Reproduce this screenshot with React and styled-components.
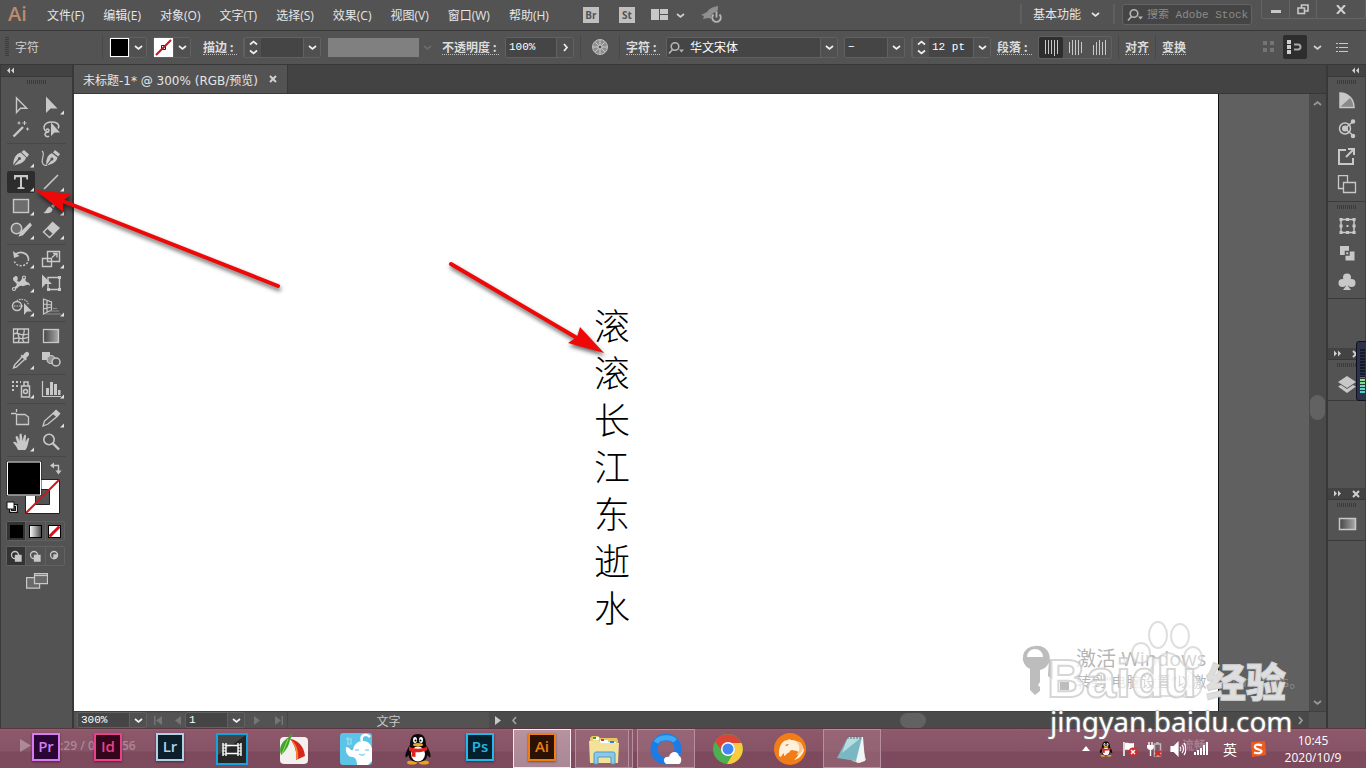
import React from 'react';
import styled, { createGlobalStyle } from 'styled-components';

const GlobalStyle = createGlobalStyle`
  * {
    box-sizing: border-box;
  }
  body {
    margin: 0;
    overflow: hidden;
    background: #535353;
    color: #e6e6e6;
    font-family: 'Open Sans', 'Noto Sans CJK SC', sans-serif;
    font-size: 12px;
  }
  button, input, select {
    margin: 0;
    padding: 0;
    border: 0;
    border-radius: 0;
    background: none;
    color: inherit;
    font: inherit;
    outline: none;
  }
  svg {
    display: block;
    flex: none;
  }
`;

const Screen = styled.div`
  position: relative;
  display: flex;
  flex-direction: column;
  height: 100vh;
`;

/* ---------- menu bar ---------- */

const MenuBar = styled.header`
  display: flex;
  height: 31px;
  padding-left: 8px;
  background: #535353;
  border-bottom: 1px solid #383838;
`;

const Brand = styled.span`
  width: 39px;
  color: #bd8a6d;
  font-size: 20px;
  font-weight: 600;
  line-height: 28px;
`;

const Menus = styled.nav`
  display: flex;
  align-items: center;
  gap: 19px;
  margin-right: 34px;
`;

const MenuButton = styled.button`
  line-height: 29px;
  white-space: nowrap;
`;

const LaunchButtons = styled.div`
  display: flex;
  align-items: center;
  gap: 16px;
`;

const LaunchTile = styled.button`
  width: 16px;
  height: 16px;
  background: #c0c0c0;
  color: #535353;
  font-size: 10px;
  font-weight: 700;
  line-height: 16px;

  & + & {
    margin-left: 4px;
  }
`;

const IconButton = styled.button`
  display: flex;
  align-items: center;
  justify-content: center;
  gap: 8px;
  min-width: ${(p) => p.$width || 16}px;
  height: ${(p) => p.$height || 20}px;
  background: ${(p) => (p.$active ? '#2e2e2e' : 'none')};
  border-radius: ${(p) => (p.$active ? 2 : 0)}px;
  color: ${(p) => (p.$dim ? '#6c6c6c' : '#d0d0d0')};
`;

const MenuRight = styled.div`
  display: flex;
  align-items: flex-start;
  margin-left: auto;
`;

const WorkspaceButton = styled.button`
  display: flex;
  align-items: center;
  gap: 10px;
  height: 20px;
  margin-top: 4px;
  padding: 0 13px 0 11px;
  border-left: 2px solid #5f5f5f;
  border-right: 2px solid #5f5f5f;
`;

const SearchBox = styled.label`
  display: flex;
  align-items: center;
  gap: 2px;
  width: 130px;
  height: 21px;
  margin: 4px 9px 0 7px;
  padding-left: 4px;
  background: #454545;
  border: 1px solid #636363;
  border-radius: 3px;

  input {
    width: 104px;
    font-family: 'Liberation Mono', 'Noto Sans CJK SC', monospace;
    font-size: 11px;
  }
  input::placeholder {
    color: #8c8c8c;
    opacity: 1;
  }
`;

const WindowButtons = styled.div`
  display: flex;
  height: 19px;
  border: 1px solid #646464;
  border-top: 0;
  border-radius: 0 0 3px 3px;

  button + button {
    border-left: 1px solid #646464;
  }
`;

/* ---------- control bar ---------- */

const ControlBar = styled.div`
  display: flex;
  align-items: center;
  gap: 6px;
  height: 34px;
  padding: 0 10px 1px 5px;
  background: #535353;
  border-bottom: 1px solid #383838;
  font-family: 'Liberation Mono', 'Noto Sans CJK SC', monospace;
`;

const BarGrip = styled.span`
  width: 4px;
  height: 20px;
  background: repeating-linear-gradient(#3c3c3c 0 1px, transparent 1px 2px);
`;

const BarTitle = styled.span`
  width: 81px;
  color: #cfcfcf;
`;

const Divider = styled.span`
  width: 1px;
  height: 24px;
  background: #484848;
`;

const PanelLink = styled.label`
  min-width: ${(p) => p.$width || 24}px;
  margin-left: ${(p) => (p.$spaced ? 6 : 0)}px;
  color: #dcdcdc;
  border-bottom: 1px dotted #bdbdbd;
  font-family: 'Noto Sans CJK SC', sans-serif;
  font-size: 12px;
  font-weight: 700;
  line-height: 14px;
  text-align: left;
  white-space: nowrap;
`;

const Field = styled.div`
  display: flex;
  width: ${(p) => p.$width}px;
  height: 21px;
  background: ${(p) => p.$fill || '#454545'};
  border: 1px solid ${(p) => (p.$plain ? 'transparent' : '#616161')};
  border-radius: 2px;

  input, select {
    flex: 1;
    min-width: 0;
    padding-left: 3px;
    color: #fff;
    font-family: 'Liberation Mono', 'Noto Sans CJK SC', monospace;
    font-size: ${(p) => (p.$large ? 12 : 11)}px;
    appearance: none;
  }
`;

const FieldButton = styled.button`
  display: flex;
  align-items: center;
  justify-content: center;
  width: 17px;
  background: #505050;
  border-left: 1px solid #616161;
  color: #f0f0f0;
`;

const Swatch = styled.span`
  width: 20px;
  background: ${(p) => p.$color};
  border: 1px solid #fff;
`;

const GreyWell = styled.span`
  flex: 1;
  background: #808080;
`;

const AlignGroup = styled.div`
  display: flex;
  border: 1px solid #616161;
  border-radius: 2px;
`;

const BarRight = styled.div`
  display: flex;
  align-items: center;
  gap: 6px;
  margin-left: auto;
`;

/* ---------- work area ---------- */

const WorkArea = styled.div`
  display: flex;
  flex: 1;
  min-height: 0;
  background: #383838;
`;

const ToolPanel = styled.aside`
  display: flex;
  flex-direction: column;
  width: 72px;
  margin-right: 2px;
  background: #535353;
  border-left: 1px solid #3a3a3a;
`;

const PanelHeader = styled.div`
  display: flex;
  align-items: center;
  justify-content: ${(p) => p.$align || 'space-between'};
  height: 12px;
  padding: 0 5px;
  background: #434343;
  border-bottom: 1px solid #383838;
  color: #cfcfcf;
`;

const Grip = styled.span`
  width: 19px;
  height: 4px;
  margin: 3px auto;
  background: repeating-linear-gradient(90deg, #3a3a3a 0 1px, transparent 1px 2px);
`;

const ToolGroup = styled.div`
  display: grid;
  grid-template-columns: 28px 28px;
  grid-auto-rows: 24px;
  column-gap: 2px;
  margin: 0 6px;
  padding: 2px 0;
  border-bottom: 1px solid #484848;

  &:nth-of-type(2) {
    margin-top: 4px;
  }
`;

const Tool = styled.button`
  height: 22px;
  margin: 1px 0;
  border-radius: 2px;
  background: ${(p) => (p.$active ? '#2d2d2d' : 'none')};
  color: #c8c8c8;
`;

const ColorBlock = styled.div`
  margin: 4px 0 4px 5px;
`;

const ModeRow = styled.div`
  display: flex;
  width: 59px;
  height: 20px;
  margin: 0 0 5px 5px;
  border: 1px solid #616161;
  border-radius: 2px;

  button {
    display: flex;
    flex: 1;
    align-items: center;
    justify-content: center;
    color: #c8c8c8;
  }
  button:first-child {
    background: #333;
  }
  button + button {
    border-left: 1px solid #616161;
  }
`;

const DocumentPane = styled.main`
  display: flex;
  flex: 1;
  flex-direction: column;
  min-width: 0;
`;

const TabBar = styled.div`
  display: flex;
  height: 29px;
  background: #434343;
  border-bottom: 1px solid #383838;
`;

const Tab = styled.div`
  display: flex;
  align-items: center;
  justify-content: space-between;
  width: 214px;
  padding: 0 10px 0 9px;
  background: #535353;
  border-right: 1px solid #383838;
  font-family: 'DejaVu Sans', 'Noto Sans CJK SC', sans-serif;
  white-space: nowrap;
`;

const CanvasRow = styled.div`
  display: flex;
  flex: 1;
  min-height: 0;
  background: #606060;
`;

const Artboard = styled.div`
  flex: 1;
  margin-right: 90px;
  padding: 207px 0 0 520px;
  background: #fff;
  border-right: 1px solid #111;
`;

const VerticalText = styled.p`
  display: grid;
  grid-auto-rows: 47px;
  margin: 0;
  color: #000;
  font-family: 'Noto Sans CJK SC', sans-serif;
  font-size: 36px;
  font-weight: 300;
  line-height: 47px;
`;

const ScrollColumn = styled.div`
  display: flex;
  flex-direction: column;
  align-items: center;
  width: 17px;
  padding: 5px 0 4px;
  background: #4a4a4a;
  color: #9a9a9a;
`;

const ScrollThumb = styled.span`
  flex: none;
  width: ${(p) => p.$width}px;
  height: ${(p) => p.$height}px;
  background: #626262;
  border-radius: 8px;
`;

const Space = styled.span`
  flex: ${(p) => p.$grow || 1};
`;

const StatusBar = styled.footer`
  display: flex;
  height: 17px;
  background: #4a4a4a;
  border-top: 1px solid #404040;
`;

const StatusInfo = styled.div`
  display: flex;
  align-items: center;
  width: 415px;
  padding-left: 3px;
  background: #535353;

  ${Field} {
    height: 16px;
  }
`;

const StatusLabel = styled.span`
  flex: 1;
  padding-top: 3px;
  border-left: 1px solid #484848;
  color: #c6c6c6;
  font-size: 12px;
  line-height: 14px;
  text-align: center;
`;

const ScrollRow = styled.div`
  display: flex;
  flex: 1;
  align-items: center;
  padding: 0 4px;
  color: #a0a0a0;
`;

const Corner = styled.span`
  width: 17px;
  background: #535353;
`;

/* ---------- right dock ---------- */

const Dock = styled.aside`
  position: relative;
  width: 38px;
  margin-left: 2px;
  background: #535353;
  border-right: 1px solid #404040;
`;

const DockPanel = styled.div`
  display: flex;
  flex-direction: column;
  padding-bottom: 2px;
  border-bottom: 1px solid #3a3a3a;
`;

const DockGap = styled.div`
  height: ${(p) => p.$height}px;
`;

const Meter = styled.div`
  position: absolute;
  top: 276px;
  right: -3px;
  width: 12px;
  height: 60px;
  padding: 7px 0 0 3px;
  background: #2b3249;
  border: 1px solid #10131f;
  border-radius: 3px;
`;

const MeterBars = styled.div`
  width: 5px;
  height: 45px;
  background:
    repeating-linear-gradient(transparent 0 2px, #2b3249 2px 3px),
    linear-gradient(#151a2b 0 28px, #9be07a 29px, #3fd0d8 45px);
`;

/* ---------- taskbar ---------- */

const TaskBar = styled.footer`
  position: relative;
  display: flex;
  height: 40px;
  padding-left: 17px;
  background: linear-gradient(#93606f 0, #8c586a 2px, #875366 22px, #7d495c 23px, #7e4a5d 100%);
  border-top: 1px solid #5a3642;
`;

const TaskList = styled.div`
  display: flex;
  gap: 4px;
`;

const Task = styled.button`
  position: relative;
  display: flex;
  align-items: center;
  justify-content: center;
  width: 58px;
  height: 39px;
  background: ${(p) => (p.$state === 'active' ? 'linear-gradient(#b7929f, #a98794)' : p.$state ? '#a0748280' : 'none')};
  border: 1px solid ${(p) => (p.$state === 'active' ? '#f4e9ee' : p.$state ? '#b88fa0' : 'transparent')};
  ${(p) => p.$stack && 'box-shadow: inset -4px 0 0 -1px #8b5b6c, inset -5px 0 0 -1px #b88fa0;'}
`;

const AppTile = styled.span`
  width: 28px;
  height: 28px;
  margin-bottom: 3px;
  background: ${(p) => p.$bg};
  border: 2px solid ${(p) => p.$color};
  box-shadow: 0 1px 2px #0006;
  color: ${(p) => p.$color};
  font-size: 15px;
  font-weight: 600;
  line-height: 23px;
`;

const PlayerGhost = styled.div`
  position: absolute;
  top: 8px;
  left: 20px;
  display: flex;
  align-items: center;
  color: #ffffff50;
  font-size: 12px;
  font-weight: 600;

  span:nth-of-type(1) {
    width: 62px;
    padding-left: 29px;
    box-sizing: content-box;
  }
`;

const Tray = styled.div`
  display: flex;
  align-items: center;
  gap: 8px;
  margin-left: auto;
  padding-right: 22px;
  color: #fff;
`;

const InputMode = styled.button`
  width: 16px;
  margin: 0 4px;
  color: #fff;
  font-size: 14px;
`;

const Clock = styled.time`
  width: 62px;
  margin-left: 8px;
  line-height: 17px;
  text-align: center;
`;

const QualityGhost = styled.span`
  position: absolute;
  right: 160px;
  top: 7px;
  color: #ffffff40;
  font-weight: 600;
`;

/* ---------- overlays ---------- */

const Arrows = styled.svg`
  position: absolute;
  left: 0;
  top: 0;
  pointer-events: none;
  filter: drop-shadow(1px 3px 2px #0009);
`;

const Watermark = styled.div`
  position: absolute;
  right: 62px;
  bottom: 30px;
  width: 284px;
  height: 123px;
  pointer-events: none;
  white-space: nowrap;
`;

const Activation = styled.div`
  position: absolute;
  left: 56px;
  top: 31px;
  color: #9c9c9cc0;
  font-size: 15px;
  line-height: 20px;

  strong {
    display: block;
    font-size: 20px;
    font-weight: 400;
    line-height: 25px;
  }
`;

const SiteLogo = styled.div`
  position: absolute;
  left: 27px;
  top: 34px;
  display: flex;
  align-items: baseline;
  gap: 9px;
  color: #ffffffb0;
  font-family: 'Liberation Sans', sans-serif;
  font-size: 54px;
  font-weight: 700;
  line-height: 58px;
  -webkit-text-stroke: 2px #c8c8c8c0;

  span {
    color: #dedede;
    font-family: 'Noto Sans CJK SC', sans-serif;
    font-size: 40px;
    font-weight: 900;
    -webkit-text-stroke: 1px #d4d4d4;
  }
`;

const SiteUrl = styled.div`
  position: absolute;
  left: 30px;
  bottom: 0;
  color: #fff;
  font-family: 'Noto Sans', sans-serif;
  font-size: 28px;
  line-height: 34px;
  text-shadow: 0 0 2px #777, 0 0 2px #888, 0 0 1px #999;
`;

const MarkArt = styled.svg`
  position: absolute;
  left: 0;
  top: 0;
`;

/* ---------- small glyphs ---------- */

const Chevron = ({ dir = 'down', size = 9 }) => {
  const d = {
    down: 'M1 3l3.5 3L8 3',
    up: 'M1 6l3.5-3L8 6',
    right: 'M3 1l3 3.5L3 8',
    left: 'M6 1L3 4.5 6 8',
  }[dir];
  return (
    <svg width={size} height={size} viewBox="0 0 9 9" fill="none" stroke="currentColor" strokeWidth="1.7">
      <path d={d} />
    </svg>
  );
};

const Stepper = () => (
  <svg width="11" height="17" fill="none" stroke="currentColor" strokeWidth="1.7">
    <path d="M2 5.5L5.5 2.5 9 5.5M2 11.5l3.500 3 3.500-3" />
  </svg>
);

const Doubles = ({ flip }) => (
  <svg width="9" height="7" fill="currentColor">
    <path d={flip ? 'M1 .5l3 3-3 3zM5 .5l3 3-3 3z' : 'M4 .5l-3 3 3 3zM8 .5l-3 3 3 3z'} />
  </svg>
);

const Cross = () => (
  <svg width="8" height="8" fill="none" stroke="currentColor" strokeWidth="2">
    <path d="M1 1l6 6M7 1L1 7" />
  </svg>
);

const Lens = () => (
  <svg width="18" height="14" fill="none" stroke="#b5b5b5" strokeWidth="1.600">
    <circle cx="7" cy="5.500" r="3.800" />
    <path d="M4.500 8.500L1 12.500" />
    <path d="M11 8.500h5l-2.500 3z" fill="#b5b5b5" stroke="none" />
  </svg>
);

const Triangle = ({ left, bar }) => (
  <svg width="9" height="9" fill="#757575">
    <path d={left ? 'M8 0v9L2 4.500z' : 'M1 0v9l6-4.500z'} />
    {bar && <path d={left ? 'M0 0h1.500v9H0z' : 'M7.500 0H9v9H7.500z'} />}
  </svg>
);

/* ---------- tools ---------- */

const solid = { fill: 'currentColor', stroke: 'none' };

const tools = [
  [
    { name: '选择工具', icon: <path d="M9.500 4v14.500l4-4.300h6.200z" strokeWidth="1.400" /> },
    { name: '直接选择工具', more: true, icon: <path d="M9 2.500v16.500l4.500-4.500h7z" {...solid} /> },
    {
      name: '魔棒工具',
      icon: (
        <>
          <path d="M6.500 18.500L16 9" strokeWidth="2.400" />
          <path d="M17.500 3v4M15.500 5h4M12 3.500v3M10.500 5h3M20.500 9.500v3M19 11h3" strokeWidth="1" />
        </>
      ),
    },
    {
      name: '套索工具',
      icon: (
        <>
          <path d="M12 14c-7 0-7-9.500 2-10 7-.3 9 3.500 7 6.500M9 12c2-2 4 0 2.500 1.500S7.500 14 8 16.500 11 19 12 18" strokeWidth="1.500" />
          <path d="M14 4.500V18l3.500-3.500H23z" {...solid} />
        </>
      ),
    },
  ],
  [
    {
      name: '钢笔工具',
      more: true,
      icon: <path d="M17 3l5 4.500-2 3L14.500 5zM13.500 5.500l5.500 5c-1 4-4 6-12 8L12 13a1.500 1.500 0 1 0-1-1l-4.800 6C6.500 10.500 9 7 13.500 5.500z" {...solid} />,
    },
    {
      name: '曲率工具',
      icon: (
        <>
          <path d="M18 3l5 4-1.700 2.500L16 5.500zM15 6.200l5.500 4.300c-1 4-3.500 6-10.500 8l4.500-5a1.500 1.500 0 1 0-1-1l-4.200 5.700C9 11 11 7.500 15 6.200z" {...solid} />
          <path d="M5 4c4 3-2 9 1 13 1 1.500 3 1.500 4 1" />
        </>
      ),
    },
    { name: '文字工具', active: true, more: true, icon: <path d="M7 4h14v4.500h-1.500L19 6.300h-4V16l2.500.5V18h-7v-1.500L13 16V6.300H9L8.500 8.500H7z" {...solid} /> },
    { name: '直线段工具', more: true, icon: <path d="M7 18L21 4" strokeWidth="1.600" /> },
    { name: '矩形工具', more: true, icon: <rect x="6.500" y="4.500" width="15" height="13" fill="#6d6d6d" strokeWidth="1.400" /> },
    {
      name: '画笔工具',
      more: true,
      icon: <path d="M22 2.500l-8 8.500 2.500 2L22 5zM13 11.500c-3 .5-3 4-6.500 6.500 5 1 9-.5 9-4.300z" {...solid} />,
    },
    {
      name: 'Shaper 工具',
      more: true,
      icon: (
        <>
          <circle cx="9.500" cy="9.500" r="5.200" fill="#6d6d6d" strokeWidth="1.500" />
          <path d="M23 3.500L13 13.500l-1.500 4.200 4.500-1.500 9-10z" {...solid} />
        </>
      ),
    },
    {
      name: '橡皮擦工具',
      more: true,
      icon: (
        <>
          <path d="M15.500 2.500L23 9l-6 6-7-6.500z" {...solid} />
          <path d="M10.500 9l-4 4 6 5.500 4-4z" strokeWidth="1.400" />
        </>
      ),
    },
  ],
  [
    {
      name: '旋转工具',
      more: true,
      icon: (
        <>
          <path d="M8 7c5-5 13-2 13.500 4" strokeWidth="1.800" />
          <path d="M21.500 11c0 8-13 9.500-14.500 1" strokeWidth="1.500" strokeDasharray="2 1.500" />
          <path d="M6 3l1 7 5.500-2z" {...solid} />
        </>
      ),
    },
    {
      name: '比例缩放工具',
      more: true,
      icon: <path d="M10.500 3.500h12v10h-12zM5.500 10.500h9v8h-9zM15 9.500l4.500-4M16 5.500h4v4" strokeWidth="1.400" />,
    },
    {
      name: '宽度工具',
      more: true,
      icon: (
        <>
          <path d="M6 6c4-5 6 0 4 3 6 3 4-5 7-5 3 1 0 5 3 6 2 .5 3 2 3 4-3-3-5 1-8 0-4-1-4 4-8 3 2-3 4-4 2-6-1-2-3-1-3-5z" {...solid} />
          <path d="M7 17L17 6" />
          <circle cx="7" cy="17" r="1.500" fill="#535353" />
          <circle cx="17" cy="5.500" r="1.500" fill="#535353" />
        </>
      ),
    },
    {
      name: '自由变换工具',
      icon: (
        <>
          <path d="M11 5.500h11.500v12H11z" strokeWidth="1.400" />
          <path d="M5 2.500v13.500l3.500-4h6.500z" {...solid} />
          <path d="M21 4h3v3h-3zM21 16h3v3h-3zM10 16h3v3h-3z" {...solid} />
        </>
      ),
    },
    {
      name: '形状生成器工具',
      more: true,
      icon: (
        <>
          <circle cx="10" cy="10" r="4.500" strokeWidth="1.500" />
          <path d="M10 5c2-3 12-2 11 4M7 10h10" strokeDasharray="1.500 1" />
          <path d="M17 7v12l3-3.500h5z" {...solid} />
        </>
      ),
    },
    {
      name: '透视网格工具',
      more: true,
      icon: (
        <>
          <path d="M6.500 3v15l8-4V6zM10 4v12.500M6.500 8l8 1M6.500 13l8-2" />
          <path d="M16 12.500h4M13 15h9M8 18h16" stroke="#8c8c8c" />
        </>
      ),
    },
  ],
  [
    {
      name: '网格工具',
      icon: <path d="M6.500 4h15v13.500h-15zM6.500 9c6-3 5 3 15 0M6.500 14c6-3 8 2 15-2M11 4c-3 5 4 7 0 13.500M17 4c2 5-4 7 0 13.500" strokeWidth="1.300" />,
    },
    {
      name: '渐变工具',
      icon: (
        <>
          <linearGradient id="toolGradient"><stop stopColor="#444" /><stop offset="1" stopColor="#aaa" /></linearGradient>
          <rect x="6.500" y="4.500" width="15" height="13" fill="url(#toolGradient)" strokeWidth="1.300" />
        </>
      ),
    },
    {
      name: '吸管工具',
      more: true,
      icon: (
        <>
          <path d="M15 8l-7.500 8-1 3 3-1 8-7.500" strokeWidth="1.400" />
          <path d="M13.500 7l1.500-1.500 1 1C18 3 20 2 21.500 3.500S22 7 19 9l1 1-1.500 1.500z" {...solid} />
        </>
      ),
    },
    {
      name: '混合工具',
      icon: (
        <>
          <path d="M5 3h8v8H5z" {...solid} />
          <circle cx="14" cy="10.500" r="4" fill="#909090" />
          <circle cx="19" cy="13" r="4" fill="#535353" strokeWidth="1.500" />
        </>
      ),
    },
  ],
  [
    {
      name: '符号喷枪工具',
      more: true,
      icon: (
        <>
          <path d="M5 4h2M9 4h2M13 4h1M5 8h2M9 8h2M5 12h2" strokeWidth="2" />
          <path d="M14.500 8h8v11h-8zM17 7.500V4h4v3.500" strokeWidth="1.500" />
          <circle cx="18.500" cy="13.500" r="2" strokeWidth="1.500" />
        </>
      ),
    },
    {
      name: '柱形图工具',
      more: true,
      icon: (
        <>
          <path d="M5.500 3v15.500H24" />
          <path d="M9 10h3v7H9zM13 4h3v13h-3zM17 6h3v11h-3zM21 12h2.500v5H21z" {...solid} />
        </>
      ),
    },
  ],
  [
    { name: '画板工具', icon: <path d="M4 6.500h5.500M9.500 2v3M9.500 7.500V17.500h12V10l-3.500-2.500z" strokeWidth="1.300" fill="#5f5f5f" /> },
    {
      name: '切片工具',
      more: true,
      icon: (
        <>
          <path d="M16 6.500L7.500 14 6 19l5-2 9-7.500z" strokeWidth="1.300" />
          <path d="M19 2.500l4.500 4-3 3.500-5-4z" {...solid} />
        </>
      ),
    },
    {
      name: '抓手工具',
      more: true,
      icon: <path d="M11 19c-1-3-3-5-5-7.500 1-1.500 3-.5 4.500 1.500L8.500 6c1-1.500 2-1 2.500 0l1.500 4L12.500 3.500c1-1.500 2-1 2.300.2L15.500 10l1.500-5.500c1-1.300 2-.6 2 .5L18.500 11l2-3.500c1-1 2-.3 1.600.8C21 12 21 16 18.500 19z" {...solid} />,
    },
    {
      name: '缩放工具',
      icon: (
        <>
          <circle cx="12" cy="8.500" r="5.200" strokeWidth="1.600" />
          <path d="M16 12.500l6 6" strokeWidth="2.400" />
        </>
      ),
    },
  ],
];

const ToolIcon = ({ tool }) => (
  <svg width="28" height="22" fill="none" stroke="currentColor" strokeWidth="1.200">
    {tool.icon}
    {tool.more && <path d="M27 16.500v4h-4z" {...solid} fill="#e2e2e2" />}
  </svg>
);

const FillStroke = () => (
  <svg width="58" height="56">
    <path d="M19.500 18.500h34v34h-34z" fill="#fff" stroke="#222" />
    <path d="M29.500 28.500h14v15h-14z" fill="#535353" stroke="#222" />
    <path d="M20 52L53 19" stroke="#d3121b" strokeWidth="2" />
    <path d="M.5 0h35v35H.5z" fill="#222" />
    <path d="M1.500 1h33v33h-33z" fill="#000" stroke="#fff" />
    <path d="M47 4.500h5.500v6" fill="none" stroke="#c8c8c8" strokeWidth="1.400" />
    <path d="M44 4.500l4-3v6zM49.500 9.500h6l-3 4z" fill="#c8c8c8" />
    <path d="M4.500 44.500h6v6h-6z" fill="none" stroke="#111" strokeWidth="3" />
    <path d="M4.500 44.500h6v6h-6z" fill="none" stroke="#ddd" />
    <path d="M1 41h7v7H1z" fill="#fff" stroke="#111" />
  </svg>
);

const MiniSwatch = ({ kind }) => (
  <svg width="13" height="13">
    <linearGradient id="miniGradient"><stop stopColor="#fff" /><stop offset="1" stopColor="#444" /></linearGradient>
    <rect x=".5" y=".5" width="12" height="12" stroke="#000" fill={{ color: '#000', gradient: 'url(#miniGradient)', none: '#fff' }[kind]} />
    {kind === 'none' && <path d="M1.500 11.500l10-10" stroke="#d3121b" strokeWidth="3" />}
  </svg>
);

const DrawMode = ({ box }) => (
  <svg width="12" height="12" fill="none" stroke="currentColor" strokeWidth="1.300">
    <circle cx="5" cy="5" r="3.500" />
    {box ? <path d="M5.500 5.500H11V11H5.500z" fill="currentColor" /> : <path d="M5 5h3.500a3.500 3.500 0 0 1-3.500 3.500z" fill="currentColor" />}
  </svg>
);

/* ---------- dock icons ---------- */

const DockIcon = ({ kind }) => (
  <svg width="20" height="20" fill="none" stroke="#c8c8c8" strokeWidth="1.500">
    {kind === 'guide' && (
      <>
        <path d="M3 2c8 0 14 6 14 14.500H3z" fill="#8a8a8a" />
        <path d="M3 2c4 0 8 2 10 5L3 16z" fill="#c8c8c8" stroke="none" />
      </>
    )}
    {kind === 'share' && (
      <>
        <circle cx="8" cy="9.500" r="5.500" />
        <circle cx="8" cy="9.500" r="2.300" fill="#c8c8c8" />
        <path d="M8 9.500l8-7M8 9.500l8 7" />
        <circle cx="16" cy="2.500" r="1.500" fill="#c8c8c8" />
        <circle cx="16" cy="17" r="1.500" fill="#c8c8c8" />
      </>
    )}
    {kind === 'export' && <path d="M9 3H2v14h14v-6M9 10l7-7M11 2h6v6" strokeWidth="2" />}
    {kind === 'assets' && <path d="M6 13.500H1.500v-13h9V7M6.500 7.500h12v10h-12z" strokeWidth="1.300" />}
    {kind === 'transform' && (
      <>
        <path d="M4 3.500h13v13H4z" />
        <path d="M4 3.500h.1M10.500 3.500h.1M17 3.500h.1M4 10h.1M17 10h.1M4 16.500h.1M10.500 16.500h.1M17 16.500h.1" strokeWidth="3" strokeLinecap="square" />
        <path d="M9.500 10h2" strokeWidth="2" />
      </>
    )}
    {kind === 'pathfinder' && (
      <>
        <path d="M3 2h9v9H3zM8.500 7.500h9v9h-9z" fill="#c8c8c8" stroke="none" />
        <path d="M8.500 7.500H12V11H8.500z" fill="#c8c8c8" stroke="#535353" />
      </>
    )}
    {kind === 'club' && (
      <g fill="#c8c8c8" stroke="none">
        <circle cx="10" cy="5.500" r="4" />
        <circle cx="5.500" cy="11" r="4" />
        <circle cx="14.500" cy="11" r="4" />
        <path d="M9 9h2v5l3 4H6l3-4z" />
      </g>
    )}
    {kind === 'layers' && (
      <g fill="#c8c8c8" stroke="none">
        <path d="M10 2l9 6-9 6-9-6z" />
        <path d="M1 12.500l3-1.500 6 4 6-4 3 1.500-9 6.500z" />
      </g>
    )}
    {kind === 'gradient' && (
      <>
        <linearGradient id="dockGradient"><stop stopColor="#444" /><stop offset="1" stopColor="#aaa" /></linearGradient>
        <path d="M2.500 4.500h16v11h-16z" fill="url(#dockGradient)" />
      </>
    )}
  </svg>
);

const dockGroups = [
  [
    ['颜色参考', 'guide'],
    ['CC Libraries', 'share'],
    ['资源导出', 'export'],
    ['画板', 'assets'],
  ],
  [
    ['变换', 'transform'],
    ['路径查找器', 'pathfinder'],
    ['符号', 'club'],
  ],
];

/* ---------- taskbar icons ---------- */

const Penguin = ({ size }) => (
  <svg width={size} height={size} viewBox="0 0 32 32">
    <ellipse cx="10" cy="29.500" rx="5" ry="2" fill="#e9a21b" />
    <ellipse cx="22" cy="29.500" rx="5" ry="2" fill="#e9a21b" />
    <path d="M8 12C8 4 11 1 16 1s8 3 8 11c2 3 5 8 4.500 12-1 1-2-.5-3-2-1 5-4 7-9.500 7s-8.500-2-9.500-7c-1 1.500-2 3-3 2C3 20 6 15 8 12z" fill="#0b0b0b" />
    <ellipse cx="16" cy="21" rx="7" ry="7.500" fill="#fff" />
    <ellipse cx="13" cy="7" rx="2" ry="3" fill="#fff" />
    <ellipse cx="19" cy="7" rx="2" ry="3" fill="#fff" />
    <circle cx="13.500" cy="7.500" r="1" />
    <circle cx="18.500" cy="7.500" r="1" />
    <ellipse cx="16" cy="11.800" rx="5" ry="1.700" fill="#f0a71d" />
    <path d="M7 13.500c5 3 13 3 18 0l.5 3.500c-4 2-9 2.500-12 2.200V24l-4-.5.500-4.500-3-1.500z" fill="#e0221c" />
  </svg>
);

const TaskIcon = ({ kind }) => {
  if (kind === 'penguin') return <Penguin size={32} />;
  return (
    <svg width="32" height="32">
      {kind === 'film' && (
        <>
          <path d="M1 1h30v30H1z" fill="#262626" stroke="#14a3da" strokeWidth="2" />
          <path d="M2 2h28L2 22z" fill="#444" />
          <path d="M7 10v13M10 10v13M22 10v13M25 10v13M10 12.500h12M10 20.500h12" fill="none" stroke="#fff" strokeWidth="1.400" />
          <path d="M7 12h3M7 15h3M7 18h3M7 21h3M22 12h3M22 15h3M22 18h3M22 21h3" stroke="#fff" />
        </>
      )}
      {kind === 'capture' && (
        <>
          <rect x="2" y="4" width="28" height="27" rx="4" fill="#f3f1ee" />
          <path d="M12 2L15 1l-3 6c-1 5-4 11-9 15-3-9 2-14 8-18z" fill="#3fa52e" />
          <path d="M12 6c8 1 14 7 15 17l-9 4C19 19 17 12 12 6z" fill="#d8281b" />
          <path d="M12 6c5 5 7 12 6 21l2-1c1-9-2-16-8-20z" fill="#f48c35" />
          <path d="M10 6L4 21" stroke="#9ddb5e" />
        </>
      )}
      {kind === 'cartoon' && (
        <>
          <rect width="32" height="32" rx="3" fill="#5cc4e6" />
          <path d="M22 8c-2-6 4-8 8-4" fill="none" stroke="#fff" strokeWidth="2.500" />
          <path d="M6 14c4 0 4 4 7 3 1-6 5-9 10-9s8 3 9 8v12l-4 4H17c0-5-2-8-5-8-4 0-7-5-6-10z" fill="#fff" />
          <path d="M15 17h4M25 17h4M19 21c2 1.500 4 1.500 6 0M6 6h5v5H7M8 4v8" fill="none" stroke="#8ed7ee" strokeWidth="1.500" />
        </>
      )}
      {kind === 'folder' && (
        <>
          <path d="M2 5l2-2h6l2 2h17l1 3v22H3z" fill="#e4c766" />
          <path d="M5 4h6v3H5zM12 7h8v3h-8zM20 9h8v3h-8z" fill="#fff" />
          <path d="M5 4h3v2H5z" fill="#3a9c3d" />
          <path d="M13 6h3v2h-3z" fill="#d64226" />
          <path d="M22 8h4v2h-4z" fill="#3182cd" />
          <path d="M1 8l9-1 3 3h18l-1 20H2z" fill="#f2e29a" />
          <path d="M6 31V21c0-2 2-2 3-2h15c2 0 3 0 3 2v10h-4v-7H10v7z" fill="#8cc9e8" stroke="#4f9ac4" />
        </>
      )}
      {kind === 'cloud' && (
        <>
          <circle cx="16" cy="16" r="12" fill="none" stroke="#1c7ce6" strokeWidth="7" />
          <path d="M6 9.500C9 4 21 3 25 8" stroke="#3da9f5" strokeWidth="5" fill="none" />
          <path d="M16 31c-5-5 0-8 3-7 1-6 9-7 10-1 3 1 3 7 0 8z" fill="#fff" />
        </>
      )}
      {kind === 'chrome' && (
        <>
          <circle cx="16" cy="16" r="15" fill="#4caf50" />
          <path d="M3 8.500A15 15 0 0 1 29.500 10H16a6 6 0 0 0-6 8z" fill="#db4437" />
          <path d="M29.500 10A15 15 0 0 1 15 31l7-12a6 6 0 0 0-3-9z" fill="#fbca3e" />
          <circle cx="16" cy="16" r="7" fill="#fff" />
          <circle cx="16" cy="16" r="5.500" fill="#4285f4" />
        </>
      )}
      {kind === 'cheetah' && (
        <>
          <circle cx="16" cy="16" r="16" fill="#f07d17" />
          <path d="M5 18c1-7 4-11 9-11l1-1 2 1c7 0 12 5 13 10-1 5-5 9-10 10 4-3 6-7 3-9-3 0-5-2-7 0-1 3-3 1-4 4l-2 1v-3l-2 2-1 2-2-1z" fill="#fff0dc" />
          <path d="M21 8c5 3 6 9 1 14 8-2 9-9 4-13z" fill="#f9c690" />
          <path d="M11 12l4-1-2 2z" fill="#d9600e" />
        </>
      )}
      {kind === 'notepad' && (
        <>
          <path d="M24 4l6 23-6 3-8-2z" fill="#d9d0ad" />
          <path d="M12 4h15l2 24-8 2z" fill="#f1f4f4" />
          <path d="M12 4h14l-6 24L1 25z" fill="#79b8c2" />
          <path d="M12 4h14L6 20z" fill="#b6dde0" />
          <path d="M12 3v3M15 3v3M18 3v3M21 3v3M24 3v3" stroke="#59686b" />
        </>
      )}
    </svg>
  );
};

const tasks = [
  { name: 'Pr', bg: '#2a0634', color: '#d67bf0' },
  { name: 'Id', bg: '#33061b', color: '#ec3f8c' },
  { name: 'Lr', bg: '#0e1f2c', color: '#afd0e6' },
  { icon: 'film' },
  { icon: 'capture' },
  { icon: 'cartoon' },
  { icon: 'penguin' },
  { name: 'Ps', bg: '#04202d', color: '#22b9ea' },
  { name: 'Ai', bg: '#2b1203', color: '#ee7d14', state: 'active' },
  { icon: 'folder', state: 'open', stack: true },
  { icon: 'cloud', state: 'open' },
  { icon: 'chrome' },
  { icon: 'cheetah' },
  { icon: 'notepad', state: 'open' },
];

const menus = ['文件(F)', '编辑(E)', '对象(O)', '文字(T)', '选择(S)', '效果(C)', '视图(V)', '窗口(W)', '帮助(H)'];

const alignBars = [
  'M3.500 3v14M6.500 3v14M9.500 3v14M12.500 3v16M15.500 3v14',
  'M3.500 5v11M6.500 3v15M9.500 3v15M12.500 3v15M15.500 5v11',
  'M3.500 8v10M6.500 5v13M9.500 3v15M12.500 5v13M15.500 3v15',
];

const App = () => {
  return (
    <Screen>
      <GlobalStyle />

      <MenuBar>
        <Brand>Ai</Brand>
        <Menus>
          {menus.map((m) => (
            <MenuButton key={m}>{m}</MenuButton>
          ))}
        </Menus>
        <LaunchButtons>
          <LaunchTile>Br</LaunchTile>
          <LaunchTile>St</LaunchTile>
          <IconButton aria-label="排列文档">
            <svg width="17" height="12" fill="#c8c8c8">
              <path d="M0 0h8v11H0zM9 0h8v5H9zM9 6h8v5H9z" />
            </svg>
            <Chevron />
          </IconButton>
          <IconButton aria-label="GPU 性能">
            <svg width="22" height="18">
              <path d="M17 0c-6 1-9 3-11 6L0 9l3 1-1 3 5-1 5 1c4-3 5-8 5-13z" fill="#8f8f8f" />
              <circle cx="15.500" cy="11.500" r="5.500" fill="#535353" />
              <path d="M12.500 8.500a4.300 4.300 0 1 0 6 0M15.500 6v5.500" fill="none" stroke="#b5b5b5" strokeWidth="1.800" />
            </svg>
          </IconButton>
        </LaunchButtons>
        <MenuRight>
          <WorkspaceButton>
            基本功能
            <Chevron />
          </WorkspaceButton>
          <SearchBox>
            <Lens />
            <input aria-label="搜索" placeholder="搜索 Adobe Stock" />
          </SearchBox>
          <WindowButtons>
            <IconButton $width={27} $height={18} aria-label="最小化">
              <svg width="10" height="10"><path d="M0 6h10v3H0z" fill="#c8c8c8" /></svg>
            </IconButton>
            <IconButton $width={27} $height={18} aria-label="还原">
              <svg width="12" height="11" fill="none" stroke="#c8c8c8" strokeWidth="1.600">
                <path d="M4.500 4V1h6.500v6H8M1 4h6.500v5.500H1z" />
              </svg>
            </IconButton>
            <IconButton $width={49} $height={18} aria-label="关闭">
              <svg width="10" height="9" fill="none" stroke="#d0d0d0" strokeWidth="2">
                <path d="M1 0l8 9M9 0L1 9" />
              </svg>
            </IconButton>
          </WindowButtons>
        </MenuRight>
      </MenuBar>

      <ControlBar>
        <BarGrip />
        <BarTitle>字符</BarTitle>
        <Divider />
        <Field $width={38}>
          <Swatch $color="#000" />
          <FieldButton aria-label="填色"><Chevron /></FieldButton>
        </Field>
        <Field $width={38}>
          <svg width="19" height="19">
            <path d="M0 0h19v19H0z" fill="#fff" />
            <path d="M7.500 7.500h4v4h-4z" fill="none" stroke="#222" />
            <path d="M2 17L17 2" stroke="#c9141b" strokeWidth="2" />
          </svg>
          <FieldButton aria-label="描边颜色"><Chevron /></FieldButton>
        </Field>
        <PanelLink $width={34} $spaced htmlFor="stroke">描边 :</PanelLink>
        <Field $width={78}>
          <FieldButton aria-label="增减描边"><Stepper /></FieldButton>
          <input id="stroke" defaultValue="" />
          <FieldButton aria-label="描边粗细"><Chevron /></FieldButton>
        </Field>
        <Field $width={109} $plain $fill="#535353">
          <GreyWell />
          <IconButton $dim disabled aria-label="画笔定义"><Chevron /></IconButton>
        </Field>
        <PanelLink $width={57} htmlFor="opacity">不透明度 :</PanelLink>
        <Field $width={69}>
          <input id="opacity" defaultValue="100%" />
          <FieldButton aria-label="不透明度滑块"><Chevron dir="right" /></FieldButton>
        </Field>
        <Divider />
        <IconButton $width={26} aria-label="重新着色图稿">
          <svg width="16" height="16" fill="none">
            <circle cx="8" cy="8" r="7.500" fill="#8e8e8e" stroke="#c0c0c0" />
            <path d="M8 1v14M1 8h14M3 3l10 10M13 3L3 13" stroke="#c8c8c8" />
            <circle cx="8" cy="8" r="2" fill="#535353" stroke="#d0d0d0" />
          </svg>
        </IconButton>
        <Divider />
        <PanelLink $width={34} htmlFor="font">字符 :</PanelLink>
        <Field $width={172} $large>
          <IconButton $width={20} aria-label="查找字体"><Lens /></IconButton>
          <input id="font" defaultValue="华文宋体" />
          <FieldButton aria-label="字体列表"><Chevron /></FieldButton>
        </Field>
        <Field $width={61}>
          <select aria-label="字体样式"><option>−</option></select>
          <FieldButton aria-label="样式列表"><Chevron /></FieldButton>
        </Field>
        <Field $width={80}>
          <FieldButton aria-label="增减字号"><Stepper /></FieldButton>
          <input aria-label="字号" defaultValue="12 pt" />
          <FieldButton aria-label="字号列表"><Chevron /></FieldButton>
        </Field>
        <PanelLink as="button" $width={35}>段落 :</PanelLink>
        <AlignGroup>
          {alignBars.map((d, i) => (
            <IconButton key={d} $width={24} $height={21} $active={i === 0} aria-label={`对齐方式 ${i + 1}`}>
              <svg width="19" height="21" stroke="#c8c8c8"><path d={d} /></svg>
            </IconButton>
          ))}
        </AlignGroup>
        <Divider />
        <PanelLink as="button">对齐</PanelLink>
        <Divider />
        <PanelLink as="button">变换</PanelLink>
        <BarRight>
          <IconButton aria-label="对齐网格">
            <svg width="14" height="14" fill="#757575">
              <path d="M1 1h4v4H1zM8 1h4v4H8zM1 8h4v4H1zM8 8h4v4H8z" />
            </svg>
          </IconButton>
          <IconButton $width={24} $height={24} $active aria-label="对齐像素">
            <svg width="16" height="14" fill="none">
              <path d="M0 0h4v4H0zM0 5h4v4H0zM0 10h4v4H0z" fill="#d0d0d0" />
              <path d="M7 4.500h4a2.500 2.500 0 0 1 0 5H7" stroke="#a8a8a8" strokeWidth="2" />
            </svg>
          </IconButton>
          <IconButton $width={9} aria-label="对齐选项"><Chevron /></IconButton>
          <IconButton $width={28} aria-label="面板菜单">
            <svg width="12" height="9" fill="#c8c8c8">
              <path d="M0 0h2v1H0zM3 0h9v1H3zM0 4h2v1H0zM3 4h9v1H3zM0 8h2v1H0zM3 8h9v1H3z" />
            </svg>
          </IconButton>
        </BarRight>
      </ControlBar>

      <WorkArea>
        <ToolPanel>
          <PanelHeader><Doubles /></PanelHeader>
          <Grip />
          {tools.map((group, i) => (
            <ToolGroup key={i}>
              {group.map((tool) => (
                <Tool key={tool.name} $active={tool.active} aria-label={tool.name}>
                  <ToolIcon tool={tool} />
                </Tool>
              ))}
            </ToolGroup>
          ))}
          <ColorBlock><FillStroke /></ColorBlock>
          <ModeRow>
            <button aria-label="颜色"><MiniSwatch kind="color" /></button>
            <button aria-label="渐变"><MiniSwatch kind="gradient" /></button>
            <button aria-label="无"><MiniSwatch kind="none" /></button>
          </ModeRow>
          <ModeRow>
            <button aria-label="正常绘图"><DrawMode box /></button>
            <button aria-label="背面绘图"><DrawMode box /></button>
            <button aria-label="内部绘图"><DrawMode /></button>
          </ModeRow>
          <IconButton aria-label="更改屏幕模式">
            <svg width="22" height="16" fill="#6a6a6a" stroke="#c8c8c8" strokeWidth="1.200">
              <path d="M.6 4.600h13v10.500H.6z" />
              <path d="M8.500.6h13v10h-13z" />
              <path d="M9 2.500h12" />
            </svg>
          </IconButton>
        </ToolPanel>

        <DocumentPane>
          <TabBar>
            <Tab>
              未标题-1* @ 300% (RGB/预览)
              <IconButton $width={8} aria-label="关闭文档"><Cross /></IconButton>
            </Tab>
          </TabBar>
          <CanvasRow>
            <Artboard>
              <VerticalText>
                {[...'滚滚长江东逝水'].map((c, i) => (
                  <span key={i}>{c}</span>
                ))}
              </VerticalText>
            </Artboard>
            <ScrollColumn>
              <Chevron dir="up" />
              <Space $grow={291} />
              <ScrollThumb $width={15} $height={25} />
              <Space $grow={282} />
              <Chevron />
            </ScrollColumn>
          </CanvasRow>
          <StatusBar>
            <StatusInfo>
              <Field $width={70}>
                <input aria-label="缩放" defaultValue="300%" />
                <FieldButton aria-label="缩放列表"><Chevron /></FieldButton>
              </Field>
              <IconButton $width={22} $height={16} aria-label="首页"><Triangle left bar /></IconButton>
              <IconButton $width={16} $height={16} aria-label="上一页"><Triangle left /></IconButton>
              <Field $width={60}>
                <input aria-label="画板" defaultValue="1" />
                <FieldButton aria-label="画板列表"><Chevron /></FieldButton>
              </Field>
              <IconButton $width={24} $height={16} aria-label="下一页"><Triangle /></IconButton>
              <IconButton $width={18} $height={16} aria-label="末页"><Triangle bar /></IconButton>
              <StatusLabel>文字</StatusLabel>
            </StatusInfo>
            <IconButton $width={17} $height={16} aria-label="状态栏选项">
              <svg width="6" height="9"><path d="M0 0l6 4.500L0 9z" fill="#c8c8c8" /></svg>
            </IconButton>
            <ScrollRow>
              <Chevron dir="left" />
              <Space $grow={382} />
              <ScrollThumb $width={26} $height={15} />
              <Space $grow={371} />
              <Chevron dir="right" />
            </ScrollRow>
            <Corner />
          </StatusBar>
        </DocumentPane>

        <Dock>
          <PanelHeader $align="flex-end"><Doubles /></PanelHeader>
          {dockGroups.map((group, i) => (
            <DockPanel key={i}>
              <Grip />
              {group.map(([label, kind]) => (
                <IconButton key={kind} $height={28} aria-label={label}><DockIcon kind={kind} /></IconButton>
              ))}
            </DockPanel>
          ))}
          <DockGap $height={49} />
          <PanelHeader><Doubles flip /><Cross /></PanelHeader>
          <DockPanel>
            <Grip />
            <IconButton $height={28} aria-label="图层"><DockIcon kind="layers" /></IconButton>
          </DockPanel>
          <DockGap $height={87} />
          <PanelHeader><Doubles flip /><Cross /></PanelHeader>
          <DockPanel>
            <Grip />
            <IconButton $height={28} aria-label="渐变"><DockIcon kind="gradient" /></IconButton>
          </DockPanel>
          <Meter><MeterBars /></Meter>
        </Dock>
      </WorkArea>

      <TaskBar>
        <PlayerGhost>
          <svg width="11" height="13"><path d="M0 0l11 6.500L0 13z" fill="#ffffff50" /></svg>
          <span>:29 / 0</span>
          <span>56</span>
        </PlayerGhost>
        <TaskList>
          {tasks.map((t) => (
            <Task key={t.name || t.icon} $state={t.state} $stack={t.stack} aria-label={t.name || t.icon}>
              {t.name ? <AppTile $bg={t.bg} $color={t.color}>{t.name}</AppTile> : <TaskIcon kind={t.icon} />}
            </Task>
          ))}
        </TaskList>
        <QualityGhost>流畅</QualityGhost>
        <Tray>
          <IconButton $width={9} aria-label="显示隐藏的图标">
            <svg width="8" height="5"><path d="M4 0l4 5H0z" fill="#fff" /></svg>
          </IconButton>
          <IconButton aria-label="QQ"><Penguin size={16} /></IconButton>
          <IconButton aria-label="操作中心">
            <svg width="16" height="16">
              <path d="M2 1v14" stroke="#fff" strokeWidth="1.500" />
              <path d="M3 2c3-1 4 1 9 0v7c-4 1-6-1-9 0z" fill="#fff" />
              <circle cx="11" cy="11" r="4.500" fill="#d42a2a" />
              <path d="M9 9l4 4M13 9l-4 4" stroke="#fff" strokeWidth="1.400" />
            </svg>
          </IconButton>
          <IconButton aria-label="电源">
            <svg width="16" height="16" fill="none">
              <path d="M3 1v4M6 1v4M4.500 8v7" stroke="#fff" strokeWidth="1.400" />
              <path d="M1 4h7v2c0 4-7 4-7 0z" fill="#fff" />
              <path d="M8.500 3h6v12h-6zM10 2h3" stroke="#bbb" strokeWidth="1.500" />
              <path d="M9 10l6 5M15 10l-6 5" stroke="#d42a2a" strokeWidth="2" />
            </svg>
          </IconButton>
          <IconButton aria-label="音量">
            <svg width="16" height="16" fill="none" stroke="#fff" strokeWidth="1.200">
              <path d="M1 5.500h3l4-4v13l-4-4H1z" fill="#fff" />
              <path d="M10 6c1 1 1 3 0 4M12 4c2 2 2 6 0 8M14 2c2.500 3 2.500 9 0 12" />
            </svg>
          </IconButton>
          <IconButton aria-label="网络">
            <svg width="16" height="13" fill="#fff">
              <path d="M0 10h2v3H0zM3 8h2v5H3zM6 6h2v7H6zM9 3h2v10H9zM12 0h2v13h-2z" />
            </svg>
          </IconButton>
          <InputMode>英</InputMode>
          <IconButton aria-label="搜狗输入法">
            <svg width="16" height="16">
              <path d="M1 1l14-1 1 14-14 2z" fill="#ee5b1f" />
              <path d="M12 4.500C8 2.500 4 4 5 6.500s6 1.500 6.500 3.500S8 13 4 11.500" fill="none" stroke="#fff" strokeWidth="2.200" />
            </svg>
          </IconButton>
          <Clock>10:45<br />2020/10/9</Clock>
        </Tray>
      </TaskBar>

      <Watermark>
        <Activation>
          <strong>激活 Windows</strong>
          转到“电脑设置”以激活 Windows。
        </Activation>
        <MarkArt width="284" height="123" fill="none">
          <path d="M15 31a12 12 0 0 0-5 23v21l5 5 5-4v-4l-2-2 2-3v-12A12 12 0 0 0 15 31zm0 3a8 8 0 0 1 8 8H7a8 8 0 0 1 8-8z" fill="#bdbdbd" fillRule="evenodd" />
          <path d="M29 44l4 3v18l-5-4zM40 67h9v8h-9z" fill="#bdbdbd" />
          <g fill="#ffffff70" stroke="#cfcfcfb0" strokeWidth="2">
            <ellipse cx="138" cy="20" rx="9" ry="13" />
            <ellipse cx="160" cy="21" rx="9" ry="12" />
            <ellipse cx="121" cy="38" rx="9" ry="10" />
            <ellipse cx="173" cy="43" rx="9" ry="11" />
            <path d="M148 38c-10 0-13 14-22 21-9 5-13 14-7 20 5 5 12 3 18 2h24c7 2 15 2 19-4 4-8-3-14-9-19-8-6-12-20-23-20z" />
          </g>
        </MarkArt>
        <SiteLogo>
          Baidu
          <span>经验</span>
        </SiteLogo>
        <SiteUrl>jingyan.baidu.com</SiteUrl>
      </Watermark>

      <Arrows width="620" height="370" fill="#ee0808" stroke="#ee0808">
        <path d="M60 200l218 86M451 264l126 74" strokeWidth="4" strokeLinecap="round" />
        <path d="M35 190l36 4-8 7v11zM604 353l-24-26-3 10-9 6z" stroke="none" />
      </Arrows>
    </Screen>
  );
};

export default App;
